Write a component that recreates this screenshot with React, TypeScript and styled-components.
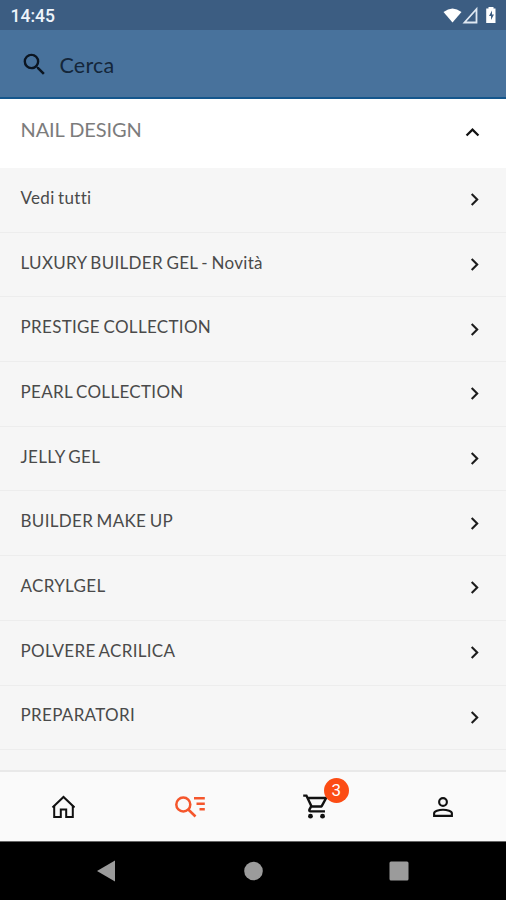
import React from "react";
import styled, { createGlobalStyle } from "styled-components";

const GlobalStyle = createGlobalStyle`
  * { box-sizing: border-box; }
  body { margin: 0; background: #000; font-family: Lato, "Open Sans", sans-serif; }
  svg { display: block; flex: none; }
`;

const Screen = styled.div`
  width: 506px;
  height: 900px;
  display: flex;
  flex-direction: column;
  overflow: hidden;
`;

const StatusBar = styled.div`
  flex: none;
  height: 30px;
  padding: 2px 8px 0 10.5px;
  display: flex;
  align-items: center;
  justify-content: space-between;
  background: #3c5d82;
`;

const Clock = styled.span`
  font: 500 17.5px/28px Roboto, sans-serif;
  color: #eef4fb;
`;

const SearchBar = styled.div`
  flex: none;
  height: 69px;
  padding: 1px 20px 0;
  display: flex;
  align-items: center;
  gap: 10.5px;
  background: #48729c;
  border-bottom: 2px solid #14568c;
`;

const SearchLabel = styled.span`
  font-size: 21.5px;
  line-height: 28px;
  letter-spacing: 0.2px;
  padding-top: 1px;
  color: #14263a;
`;

const CategoryHeader = styled.div`
  flex: none;
  height: 69px;
  padding: 0 20px 7px 20.5px;
  display: flex;
  align-items: center;
  justify-content: space-between;
  background: #fff;
`;

const CategoryTitle = styled.span`
  font-size: 20px;
  line-height: 26px;
  letter-spacing: -0.1px;
  padding-bottom: 2px;
  color: #7c7c7c;
`;

const List = styled.div`
  flex: 1;
  min-height: 0;
  overflow: hidden;
  background: #f6f6f6;
`;

const Row = styled.div`
  height: 64.7px;
  padding: 0 19px 4px 20.5px;
  display: flex;
  align-items: center;
  justify-content: space-between;
  border-bottom: 1px solid #ededed;
`;

const RowLabel = styled.span`
  font-size: 17px;
  line-height: 22px;
  letter-spacing: 0.32px;
  word-spacing: -1.2px;
  font-variant-ligatures: none;
  color: #4a4a4a;
`;

const RowIcon = styled.span`
  padding-top: 4px;
`;

const TabBar = styled.div`
  flex: none;
  height: 72px;
  display: grid;
  grid-template-columns: repeat(4, 1fr);
  background: #fafafa;
  border-top: 2px solid #e9e9e9;
  border-bottom: 1px solid #666;
`;

const Tab = styled.div`
  display: flex;
  align-items: center;
  justify-content: center;
`;

const BadgeAnchor = styled.div`
  position: relative;
`;

const Badge = styled.span`
  position: absolute;
  left: 22px;
  top: -14px;
  width: 25px;
  height: 25px;
  border-radius: 50%;
  background: #fc4c14;
  color: #fff;
  font: 400 17px/25px Roboto, sans-serif;
  text-align: center;
`;

const SystemBar = styled.div`
  flex: none;
  height: 58px;
  padding: 0 34px;
  display: grid;
  grid-template-columns: repeat(3, 1fr);
  align-items: center;
  justify-items: center;
  background: #000;
`;

const ROWS = [
  "Vedi tutti",
  "LUXURY BUILDER GEL - Novità",
  "PRESTIGE COLLECTION",
  "PEARL COLLECTION",
  "JELLY GEL",
  "BUILDER MAKE UP",
  "ACRYLGEL",
  "POLVERE ACRILICA",
  "PREPARATORI",
];

const StatusIcons = () => (
  <svg width="56" height="20" viewBox="0 0 56 20">
    <path d="M1.500 6Q10.500 -1 19.500 6L10.500 16.500Z" fill="#fff" />
    <path d="M22.500 16.500L34.500 3V16.500Z" fill="none" stroke="#dfe8f2" strokeWidth="1.800" />
    <path d="M46.500 2.500V1H51.500V2.500H53.500V17H44.200V2.500Z" fill="#fff" />
    <path d="M50 4.500L47 10H49V14L52 8.500H50Z" fill="#3c5d82" />
  </svg>
);

const SearchIcon = () => (
  <svg width="29" height="29" viewBox="0 0 24 24" fill="#0b1521">
    <path d="M15.500 14h-.79l-.28-.27A6.471 6.471 0 0 0 16 9.500 6.500 6.500 0 1 0 9.500 16c1.610 0 3.090-.59 4.230-1.570l.27.28v.79l5 4.990L20.490 19l-4.990-5zm-6 0C7.010 14 5 11.990 5 9.500S7.010 5 9.500 5 14 7.010 14 9.500 11.990 14 9.500 14z" />
  </svg>
);

const ChevronRight = () => (
  <svg width="25" height="25" viewBox="0 0 24 24" fill="#1c1c1c">
    <path d="M10 6L8.590 7.410 13.170 12l-4.580 4.590L10 18l6-6z" />
  </svg>
);

const ChevronUp = () => (
  <svg width="27" height="27" viewBox="0 0 24 24" fill="#111">
    <path d="M12 8l-6 6 1.410 1.410L12 10.830l4.590 4.580L18 14z" />
  </svg>
);

const HomeIcon = () => (
  <svg width="24" height="24" viewBox="0 0 24 24" fill="none" stroke="#111" strokeWidth="2">
    <path d="M1.500 12.500L12.500 2L23.500 12.500" />
    <path d="M3.200 10.800V22H9.800V14.500H15.200V22H21.800V10.800" />
  </svg>
);

const SearchListIcon = () => (
  <svg width="32" height="24" viewBox="0 0 32 24" fill="none" stroke="#f5562c" strokeWidth="2.500">
    <circle cx="9.300" cy="9.500" r="7" />
    <path d="M14.300 14.500L21.500 21.500" />
    <path d="M20 3.300H30.800M22.500 8.800H30.800M25.500 14.300H30.800" />
  </svg>
);

const CartIcon = () => (
  <svg width="29" height="29" viewBox="0 0 24 24" fill="#111">
    <path d="M15.550 13c.75 0 1.410-.41 1.750-1.030l3.580-6.490A.996.996 0 0 0 20.010 4H5.210l-.94-2H1v2h2l3.600 7.590-1.350 2.440C4.520 15.370 5.480 17 7 17h12v-2H7l1.100-2h7.450zM6.160 6h12.150l-2.760 5H8.530L6.160 6z" />
    <circle cx="7" cy="20" r="2" />
    <circle cx="17" cy="20" r="2" />
  </svg>
);

const PersonIcon = () => (
  <svg width="30" height="30" viewBox="0 0 24 24" fill="none" stroke="#111" strokeWidth="1.700">
    <circle cx="12" cy="8" r="3.100" />
    <path d="M4.900 19.100V17C4.900 15.600 8.500 14.200 12 14.200S19.100 15.600 19.100 17V19.100Z" />
  </svg>
);

export default function App() {
  return (
    <>
      <GlobalStyle />
      <Screen>
        <StatusBar>
          <Clock>14:45</Clock>
          <StatusIcons />
        </StatusBar>
        <SearchBar>
          <SearchIcon />
          <SearchLabel>Cerca</SearchLabel>
        </SearchBar>
        <CategoryHeader>
          <CategoryTitle>NAIL DESIGN</CategoryTitle>
          <RowIcon>
            <ChevronUp />
          </RowIcon>
        </CategoryHeader>
        <List>
          {ROWS.map((label) => (
            <Row key={label}>
              <RowLabel>{label}</RowLabel>
              <RowIcon>
                <ChevronRight />
              </RowIcon>
            </Row>
          ))}
        </List>
        <TabBar>
          <Tab><HomeIcon /></Tab>
          <Tab><SearchListIcon /></Tab>
          <Tab>
            <BadgeAnchor>
              <CartIcon />
              <Badge>3</Badge>
            </BadgeAnchor>
          </Tab>
          <Tab><PersonIcon /></Tab>
        </TabBar>
        <SystemBar>
          <svg width="20" height="22" viewBox="0 0 20 22"><path d="M0 11L18 0.500V21.500Z" fill="#9b9b9b" /></svg>
          <svg width="20" height="20" viewBox="0 0 20 20"><circle cx="10.500" cy="10" r="9.300" fill="#9b9b9b" /></svg>
          <svg width="20" height="20" viewBox="0 0 20 20"><rect x="0.500" y="0.500" width="19" height="19" rx="1.500" fill="#9b9b9b" /></svg>
        </SystemBar>
      </Screen>
    </>
  );
}
